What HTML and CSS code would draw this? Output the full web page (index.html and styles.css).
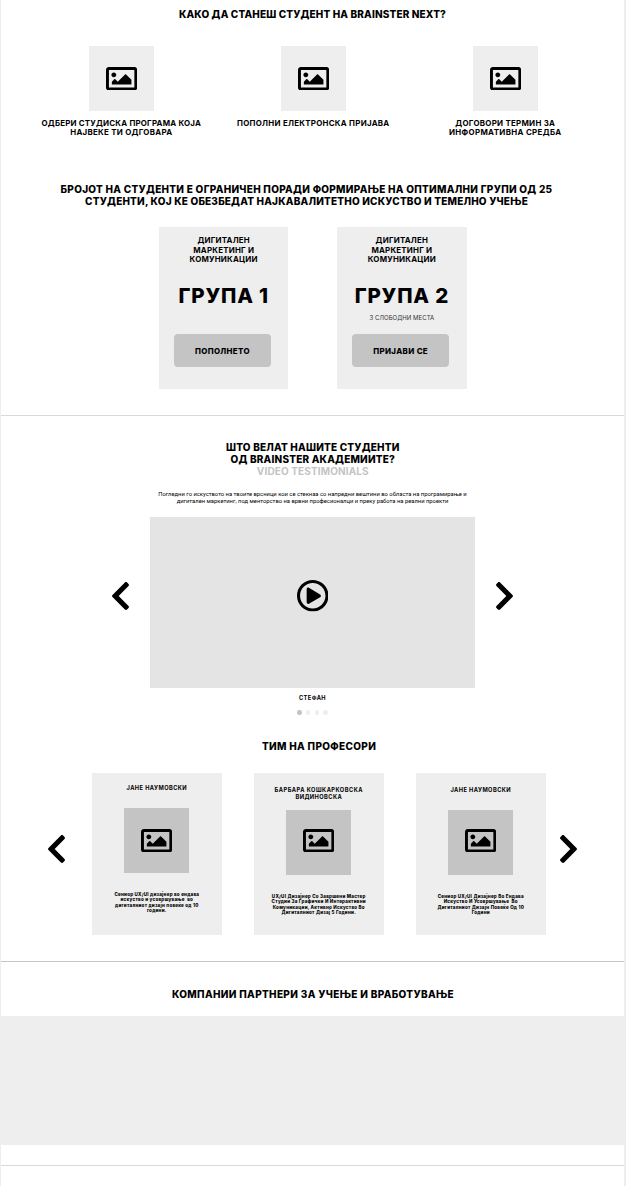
FILE: index.html
```
<!DOCTYPE html>
<html lang="mk">
<head>
<meta charset="utf-8">
<title>Brainster Next</title>
<link rel="stylesheet" href="styles.css">
</head>
<body>
<svg class="sprite" aria-hidden="true">
  <symbol id="image" viewBox="0 64 512 384"><path d="M464 64H48C21.49 64 0 85.49 0 112v288c0 26.51 21.49 48 48 48h416c26.51 0 48-21.49 48-48V112c0-26.51-21.49-48-48-48zm-6 336H54a6 6 0 0 1-6-6V118a6 6 0 0 1 6-6h404a6 6 0 0 1 6 6v276a6 6 0 0 1-6 6zM128 152c-22.091 0-40 17.909-40 40s17.909 40 40 40 40-17.909 40-40-17.909-40-40-40zM96 352h320v-80l-87.515-87.515c-4.686-4.686-12.284-4.686-16.971 0L192 304l-39.515-39.515c-4.686-4.686-12.284-4.686-16.971 0L96 304v48z"/></symbol>
  <symbol id="chevron" viewBox="27 37 266 438"><path d="M34.52 239.03L228.87 44.69c9.37-9.37 24.57-9.37 33.94 0l22.67 22.67c9.36 9.36 9.37 24.52.04 33.9L131.49 256l154.02 154.75c9.34 9.38 9.32 24.54-.04 33.9l-22.67 22.67c-9.37 9.37-24.57 9.37-33.94 0L34.52 272.97c-9.37-9.37-9.37-24.57 0-33.94z"/></symbol>
  <symbol id="play" viewBox="8 8 496 496"><path d="M371.7 238l-176-107c-15.8-8.8-35.7 2.5-35.7 21v208c0 18.4 19.8 29.8 35.7 21l176-101c16.4-9.1 16.4-32.8 0-42zM504 256C504 119 393 8 256 8S8 119 8 256s111 248 248 248 248-111 248-248zm-448 0c0-110.5 89.5-200 200-200s200 89.5 200 200-89.5 200-200 200S56 366.5 56 256z"/></symbol>
</svg>
<main class="page">
  <section class="apply">
    <h2 class="heading"><span>КАКО ДА СТАНЕШ СТУДЕНТ НА BRAINSTER NEXT?</span></h2>
    <div class="steps">
      <div class="step">
        <div class="thumb"><svg class="icon-image"><use href="#image"/></svg></div>
        <p class="label"><span class="tight">ОДБЕРИ СТУДИСКА ПРОГРАМА КОЈА</span><span>НАЈВЕКЕ ТИ ОДГОВАРА</span></p>
      </div>
      <div class="step">
        <div class="thumb"><svg class="icon-image"><use href="#image"/></svg></div>
        <p class="label"><span>ПОПОЛНИ ЕЛЕКТРОНСКА ПРИЈАВА</span></p>
      </div>
      <div class="step">
        <div class="thumb"><svg class="icon-image"><use href="#image"/></svg></div>
        <p class="label"><span>ДОГОВОРИ ТЕРМИН ЗА</span><span class="loose">ИНФОРМАТИВНА СРЕДБА</span></p>
      </div>
    </div>
    <h2 class="heading limit"><span class="loose">БРОЈОТ НА СТУДЕНТИ Е ОГРАНИЧЕН ПОРАДИ ФОРМИРАЊЕ НА ОПТИМАЛНИ ГРУПИ ОД 25</span><span>СТУДЕНТИ, КОЈ КЕ ОБЕЗБЕДАТ НАЈКАВАЛИТЕТНО ИСКУСТВО И ТЕМЕЛНО УЧЕЊЕ</span></h2>
    <div class="groups">
      <article class="group">
        <p class="label"><span>ДИГИТАЛЕН</span><span>МАРКЕТИНГ И</span><span>КОМУНИКАЦИИ</span></p>
        <h3 class="group-name">ГРУПА 1</h3>
        <p class="seats"></p>
        <button class="button">ПОПОЛНЕТО</button>
      </article>
      <article class="group">
        <p class="label"><span>ДИГИТАЛЕН</span><span>МАРКЕТИНГ И</span><span>КОМУНИКАЦИИ</span></p>
        <h3 class="group-name">ГРУПА 2</h3>
        <p class="seats">3 СЛОБОДНИ МЕСТА</p>
        <button class="button">ПРИЈАВИ СЕ</button>
      </article>
    </div>
  </section>
  <section class="stories">
    <h2 class="heading stories-title"><span>ШТО ВЕЛАТ НАШИТЕ СТУДЕНТИ</span><span>ОД BRAINSTER АКАДЕМИИТЕ?</span><span class="muted">VIDEO TESTIMONIALS</span></h2>
    <p class="intro"><span>Погледни го искуството на твоите врсници кои се стекнаа со напредни вештини во областа на програмирање и</span><span>дигитален маркетинг, под менторство на врвни професионалци и преку работа на реални проекти</span></p>
    <div class="player">
      <svg class="chevron"><use href="#chevron"/></svg>
      <div class="video"><svg class="icon-play"><use href="#play"/></svg></div>
      <svg class="chevron next"><use href="#chevron"/></svg>
    </div>
    <p class="person">СТЕФАН</p>
    <div class="dots"><i class="dot active"></i><i class="dot"></i><i class="dot"></i><i class="dot"></i></div>
    <h2 class="heading team-title"><span>ТИМ НА ПРОФЕСОРИ</span></h2>
    <div class="team">
      <svg class="chevron"><use href="#chevron"/></svg>
      <div class="cards">
        <article class="card first">
          <h3 class="person"><span>ЈАНЕ НАУМОВСКИ</span></h3>
          <div class="thumb dark"><svg class="icon-image"><use href="#image"/></svg></div>
          <p class="bio"><span>Сениор UX/UI дизајнер во ендава</span><span>искуство и усовршување&nbsp; во</span><span>дигиталниот дизајн повеќе од 10</span><span>години.</span></p>
        </article>
        <article class="card">
          <h3 class="person"><span class="loose">БАРБАРА КОШКАРКОВСКА</span><span>ВИДИНОВСКА</span></h3>
          <div class="thumb dark"><svg class="icon-image"><use href="#image"/></svg></div>
          <p class="bio"><span>UX/UI Дизајнер Со Завршени Мастер</span><span>Студии За Графички И Интерактивни</span><span>Комуникации, Активно Искуство Во</span><span>Дигиталниот Дизај 5 Години.</span></p>
        </article>
        <article class="card">
          <h3 class="person"><span>ЈАНЕ НАУМОВСКИ</span></h3>
          <div class="thumb dark"><svg class="icon-image"><use href="#image"/></svg></div>
          <p class="bio"><span>Сениор UX/UI Дизајнер Во Ендава</span><span>Искуство И Усовршување&nbsp; Во</span><span>Дигиталниот Дизајн Повеќе Од 10</span><span>Години</span></p>
        </article>
      </div>
      <svg class="chevron next"><use href="#chevron"/></svg>
    </div>
  </section>
  <section class="partners">
    <h2 class="heading"><span>КОМПАНИИ ПАРТНЕРИ ЗА УЧЕЊЕ И ВРАБОТУВАЊЕ</span></h2>
    <div class="logos"></div>
  </section>
</main>
</body>
</html>
```
FILE: styles.css
```
* { box-sizing: border-box; margin: 0; padding: 0; }
body { background: #fff; color: #000; font-family: Inter, "Liberation Sans", sans-serif; }
.sprite { display: none; }
svg { display: block; fill: currentColor; }
span { display: block; white-space: nowrap; }
.page { width: 626px; height: 1186px; overflow: hidden; border-left: 1px solid #eee; border-right: 2px solid #eee; }

.heading { font-size: 10px; line-height: 12px; font-weight: 800; letter-spacing: .15px; text-align: center; }
.label { font-size: 7.9px; line-height: 9.33px; font-weight: 700; letter-spacing: .28px; text-align: center; }
.label .tight { letter-spacing: .208px; }
.label .loose { letter-spacing: .35px; }
.muted { color: #c4c4c4; font-weight: 700; letter-spacing: .13px; }

.apply { height: 416px; padding-top: 8px; border-bottom: 1px solid #d9d9d9; }
.steps { display: grid; grid-template-columns: repeat(3, 192px); height: 137px; margin: 26px 0 0 24.3px; }
.step { display: flex; flex-direction: column; align-items: center; gap: 8px; }
.thumb { display: flex; align-items: center; justify-content: center; width: 65px; height: 64.5px; background: #eee; }
.thumb.dark { height: 65px; background: #c4c4c4; }
.icon-image { width: 31.3px; height: 23.5px; }
.limit { padding-right: 12px; letter-spacing: .2px; }
.limit .loose { letter-spacing: .282px; }

.groups { display: flex; gap: 48.8px; margin: 20px 0 0 158px; }
.group { width: 129.4px; height: 162px; padding-top: 9.2px; background: #eee; display: flex; flex-direction: column; align-items: center; }
.group .label { letter-spacing: .22px; }
.group-name { margin-top: 19.5px; font-size: 20.5px; line-height: 24px; font-weight: 800; letter-spacing: .8px; }
.seats { height: 8px; margin-top: 6.2px; font-size: 6px; line-height: 8px; font-weight: 400; letter-spacing: .06px; color: #333; }
.button { width: 97.3px; height: 32.7px; margin: 12.2px 2.5px 0 0; padding-top: 1.4px; border: 0; border-radius: 4px; background: #c4c4c4; color: #000; font: 800 7.9px Inter, "Liberation Sans", sans-serif; letter-spacing: .34px; text-align: center; }

.stories { height: 546px; padding-top: 25px; border-bottom: 1px solid #c4c4c4; }
.stories-title { padding-left: .6px; letter-spacing: .2px; }
.intro { margin-top: 13.5px; font: 400 5.83px/7px Roboto, sans-serif; text-align: center; }
.player { display: flex; align-items: flex-start; justify-content: center; gap: 21px; margin-top: 12.5px; }
.chevron { width: 17px; height: 28px; flex: none; }
.next { transform: scaleX(-1); }
.player .chevron { margin-top: 65px; }
.video { width: 325px; height: 171px; background: #e4e4e4; display: flex; align-items: center; justify-content: center; padding-bottom: 13px; }
.icon-play { width: 31.5px; height: 31.5px; }
.person { font-size: 5.7px; line-height: 7px; font-weight: 700; letter-spacing: .43px; text-align: center; }
.person .loose { letter-spacing: .48px; }
.stories > .person { margin-top: 6px; }
.dots { display: flex; justify-content: center; gap: 4.2px; margin-top: 9.1px; }
.dot { width: 4.5px; height: 4.5px; border-radius: 50%; background: #eee; }
.dot.active { background: #c4c4c4; }
.team-title { margin-top: 25.3px; padding-left: 13px; letter-spacing: .33px; }
.team { display: flex; align-items: flex-start; margin: 21px 0 0 47px; gap: 14px; }
.team > .chevron { margin-top: 62.3px; }
.team > .chevron:first-child { margin-right: 13px; }
.cards { display: flex; gap: 32.4px; }
.card { width: 129.6px; height: 162px; padding-top: 13px; background: #eee; display: flex; flex-direction: column; align-items: center; }
.card .person { height: 24.6px; }
.card .thumb { padding-bottom: 4.5px; }
.card.first { padding-top: 11px; }
.card.first .person { height: 24.1px; }
.card.first .thumb { padding-bottom: 0; }
.bio { margin-top: 18.2px; font-size: 4.5px; line-height: 5.55px; font-weight: 800; letter-spacing: .25px; text-align: center; }
.card.first .bio { margin-top: 18.8px; }

.partners { padding-top: 26.1px; height: 204px; border-bottom: 1px solid #d9d9d9; }
.partners .heading { padding-left: 1px; letter-spacing: .34px; }
.logos { height: 129px; margin-top: 15.9px; background: #eee; }
```
